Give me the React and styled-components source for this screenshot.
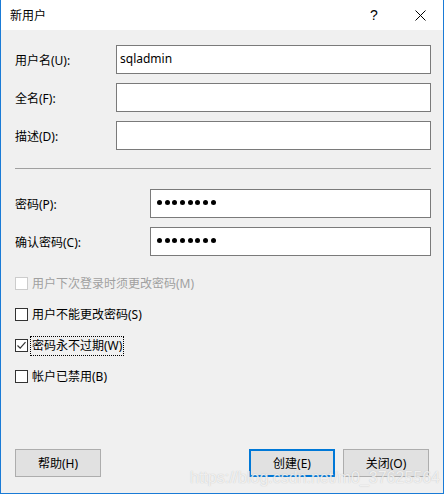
import React from 'react';
import styled, { createGlobalStyle } from 'styled-components';

const Global = createGlobalStyle`
  html, body { margin:0; padding:0; background:#fff; }
  body { font-family:"Noto Sans","Noto Sans CJK SC",sans-serif; font-size:12px; color:#000; }
`

const Page = styled.div`
  position:relative;
  width:447px;
  height:497px;
  overflow:hidden;
`
const Window = styled.div`
  width:444px;
  height:494px;
  box-sizing:border-box;
  border:1px solid #1a7bd6;
  border-top:none;
  display:flex;
  flex-direction:column;
  background:#f0f0f0;
`
const TitleBar = styled.div`
  height:30px;
  flex:none;
  background:#fff;
  display:flex;
  align-items:center;
  padding-left:9px;
  font-size:12px;
`
const Title = styled.div`
  flex:1;
`
const TitleButton = styled.div`
  width:46px;
  height:30px;
  display:flex;
  align-items:center;
  justify-content:center;
  font-family:"Liberation Sans",sans-serif;
  font-size:14px;
`
const Body = styled.div`
  flex:1;
  display:flex;
  flex-direction:column;
  padding:15px 12px 16px 14px;
`
const FieldRow = styled.div`
  display:grid;
  grid-template-columns:${p => p.labelWidth}px 1fr;
  align-items:center;
  margin-bottom:9px;
`
const Label = styled.div`
  white-space:nowrap;
`
const TextBox = styled.div`
  height:29px;
  box-sizing:border-box;
  border:1px solid #7a7a7a;
  background:#fff;
  padding:4px 3px 0;
  font-size:12px;
  display:flex;
  align-items:${p => p.dots ? 'center' : 'flex-start'};
`
const Dots = styled.div`
  display:flex;
  gap:2.7px;
  padding-left:3px;
  margin-top:-7px;
`
const Dot = styled.span`
  width:5px;
  height:5px;
  border-radius:50%;
  background:#000;
`
const Separator = styled.div`
  height:1px;
  background:#a0a0a0;
  margin:9px 0 20px;
`
const Checks = styled.div`
  display:flex;
  flex-direction:column;
  margin-top:3px;
`
const CheckRow = styled.div`
  height:31px;
  display:flex;
  align-items:center;
  color:${p => p.disabled ? '#a0a0a0' : '#000'};
`
const Box = styled.span`
  width:13px;
  height:13px;
  box-sizing:border-box;
  border:1px solid ${p => p.disabled ? '#cccccc' : '#333'};
  background:#fff;
  margin-right:2px;
  display:flex;
  align-items:center;
  justify-content:center;
  flex:none;
`
const CheckText = styled.span`
  padding:1px 1px;
  border:1px dotted ${p => p.focused ? '#000' : 'transparent'};
  line-height:16px;
`
const Spacer = styled.div`
  flex:1;
`
const ButtonRow = styled.div`
  display:flex;
  justify-content:space-between;
  padding-right:2px;
`
const ButtonGroup = styled.div`
  display:flex;
  gap:8px;
`
const Button = styled.div`
  width:86px;
  height:28px;
  box-sizing:border-box;
  border:${p => p.primary ? '2px solid #0078d7' : '1px solid #adadad'};
  background:#e1e1e1;
  display:flex;
  align-items:center;
  justify-content:center;
`
const Watermark = styled.div`
  position:absolute;
  left:190px;
  top:469px;
  line-height:18px;
  font-family:"Liberation Sans",sans-serif;
  font-size:16px;
  color:rgba(255,255,255,0.75);
  text-shadow:0 0 1px rgba(150,150,150,0.6);
  pointer-events:none;
`

const Check = () => (
  <svg width="11" height="11" viewBox="0 0 11 11">
    <path d="M1.5 5.5 L4.2 8.2 L9.5 2.2" fill="none" stroke="#333" strokeWidth="1.2" />
  </svg>
)

const Close = () => (
  <svg width="11" height="11" viewBox="0 0 11 11">
    <path d="M0.5 0.5 L10.5 10.5 M10.5 0.5 L0.5 10.5" stroke="#000" strokeWidth="1" />
  </svg>
)

const Password = () => (
  <TextBox dots>
    <Dots>{Array.from({ length: 8 }).map((_, i) => <Dot key={i} />)}</Dots>
  </TextBox>
)

export default function App() {
  return (
    <Page>
      <Global />
      <Window>
        <TitleBar>
          <Title>新用户</Title>
          <TitleButton>?</TitleButton>
          <TitleButton><Close /></TitleButton>
        </TitleBar>
        <Body>
          <FieldRow labelWidth={101}>
            <Label>用户名(U):</Label>
            <TextBox>sqladmin</TextBox>
          </FieldRow>
          <FieldRow labelWidth={101}>
            <Label>全名(F):</Label>
            <TextBox />
          </FieldRow>
          <FieldRow labelWidth={101}>
            <Label>描述(D):</Label>
            <TextBox />
          </FieldRow>
          <Separator />
          <FieldRow labelWidth={135}>
            <Label>密码(P):</Label>
            <Password />
          </FieldRow>
          <FieldRow labelWidth={135}>
            <Label>确认密码(C):</Label>
            <Password />
          </FieldRow>
          <Checks>
            <CheckRow disabled>
              <Box disabled />
              <CheckText>用户下次登录时须更改密码(M)</CheckText>
            </CheckRow>
            <CheckRow>
              <Box />
              <CheckText>用户不能更改密码(S)</CheckText>
            </CheckRow>
            <CheckRow>
              <Box><Check /></Box>
              <CheckText focused>密码永不过期(W)</CheckText>
            </CheckRow>
            <CheckRow>
              <Box />
              <CheckText>帐户已禁用(B)</CheckText>
            </CheckRow>
          </Checks>
          <Spacer />
          <ButtonRow>
            <Button>帮助(H)</Button>
            <ButtonGroup>
              <Button primary>创建(E)</Button>
              <Button>关闭(O)</Button>
            </ButtonGroup>
          </ButtonRow>
        </Body>
      </Window>
      <Watermark>https://blog.csdn.net/m0_37625564</Watermark>
    </Page>
  )
}
